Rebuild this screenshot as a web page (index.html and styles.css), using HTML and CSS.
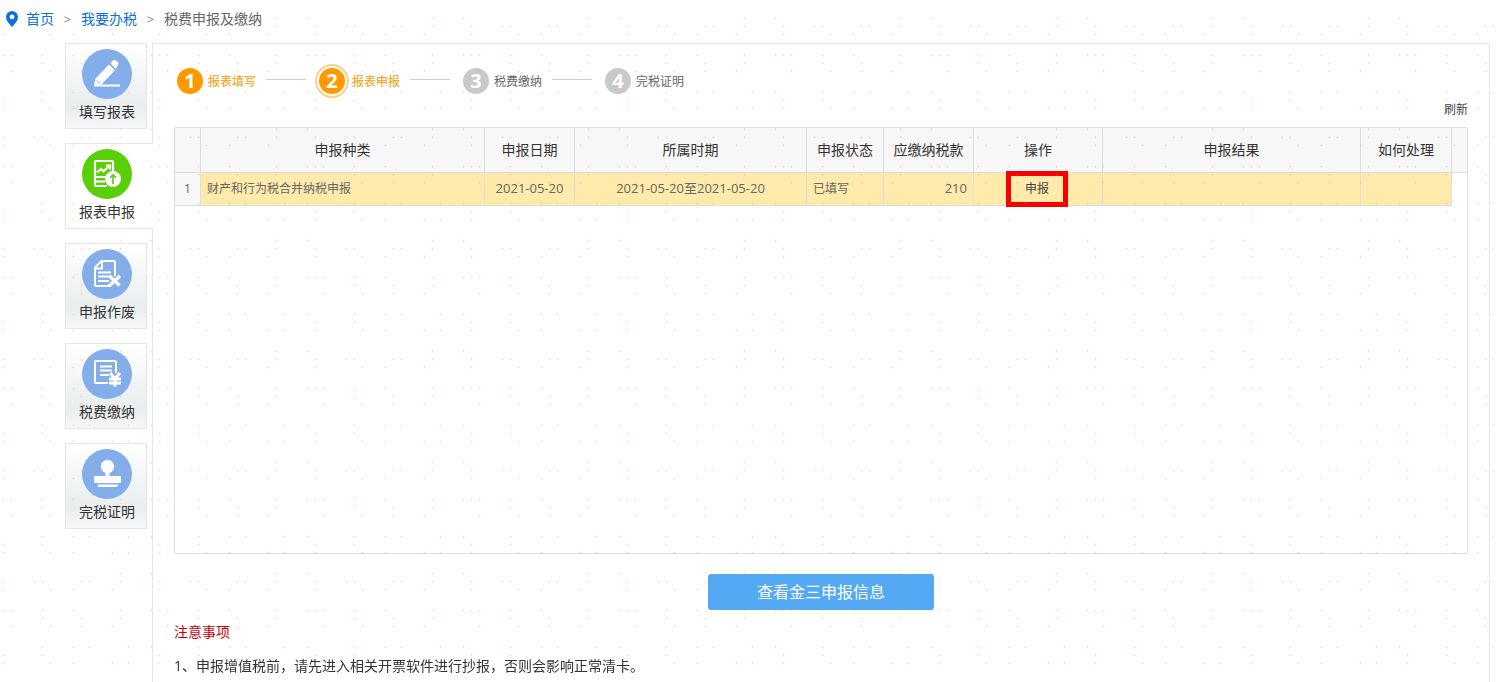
FILE: index.html
```html
<!DOCTYPE html>
<html lang="zh-CN">
<head>
<meta charset="utf-8">
<title>税费申报及缴纳</title>
<link rel="stylesheet" href="styles.css">
</head>
<body>
<header class="top">
<nav class="crumbs" aria-label="breadcrumb">
  <svg class="pin" viewBox="0 0 12 16" aria-hidden="true"><path fill="#0b6fdc" fill-rule="evenodd" d="M6 0a6 6 0 0 1 6 6c0 3-2 5.500-6 10C2 11.500 0 9 0 6a6 6 0 0 1 6-6zm0 3.500a2.400 2.400 0 1 0 0 4.800 2.400 2.400 0 0 0 0-4.800z"/></svg>
  <a href="#">首页</a><span class="sep">&gt;</span><a href="#">我要办税</a><span class="sep">&gt;</span><span>税费申报及缴纳</span>
</nav>
</header>
<div class="layout">
  <nav class="tabs" aria-label="办税步骤">
    <a class="tab" href="#">
      <svg class="tab-icon" viewBox="0 0 50 50" aria-hidden="true"><circle cx="25" cy="25" r="25"/><g fill="#fff"><path d="M12.500 35.500H38v2H12z"/><path d="M12 36.500l1.500-7L27 15.500l6 5.800L19.500 35.500z"/><path d="M28.500 14.200l2.300-2.500c1-1 2.200-1.100 3.300-.1l1.600 1.500c1.100 1.100 1 2.300.1 3.300l-1.900 3.500z"/></g><path d="M14.700 31.400l3.800 3.600" stroke="#83aee9" stroke-width="1"/></svg>
      <span>填写报表</span>
    </a>
    <a class="tab tab-active" href="#" aria-current="page">
      <svg class="tab-icon" viewBox="0 0 50 50" aria-hidden="true"><circle cx="25" cy="25" r="25"/><g fill="none" stroke="#fff" stroke-width="2.200"><path d="M25 37H14a1 1 0 0 1-1-1V13a1 1 0 0 1 1-1h16a1 1 0 0 1 1 1v10"/><path d="M15 23.500l4-3.500 2.500 2.200 6-5.200M24 16.500h4v4M14 28h10M14 32.500h9"/></g><circle cx="31" cy="30" r="8" fill="#fff"/><path d="M31 35v-9M28 28.800l3-3 3 3" fill="none" stroke="#58cf06" stroke-width="1.600"/></svg>
      <span>报表申报</span>
    </a>
    <a class="tab" href="#">
      <svg class="tab-icon" viewBox="0 0 50 50" aria-hidden="true"><circle cx="25" cy="25" r="25"/><g fill="none" stroke="#fff" stroke-width="2"><path d="M29 37H14a1 1 0 0 1-1-1V18.500l6.500-6.500H32a1 1 0 0 1 1 1V27M13 19.500h7V12M16 23.500h13M16 27.500h12M16 32h11"/><path d="M27.500 27l10 9.500M38 27L27 37" stroke-width="3.600"/></g></svg>
      <span>申报作废</span>
    </a>
    <a class="tab" href="#">
      <svg class="tab-icon" viewBox="0 0 50 50" aria-hidden="true"><circle cx="25" cy="25" r="25"/><g fill="none" stroke="#fff" stroke-width="2"><path d="M26 34H14a1 1 0 0 1-1-1V13a1 1 0 0 1 1-1h19a1 1 0 0 1 1 1v11M18 17.500h12M18 21.500h12M18 26h9"/><path d="M28 24l5 5.500 5-5.500M27 30h12M27 34h12M33 29v8.500" stroke-width="3"/></g></svg>
      <span>税费缴纳</span>
    </a>
    <a class="tab" href="#">
      <svg class="tab-icon" viewBox="0 0 50 50" aria-hidden="true"><circle cx="25" cy="25" r="25"/><g fill="#fff"><circle cx="25.500" cy="17.500" r="6.700"/><path d="M23.500 22h4v6h-4z"/><rect x="12" y="27" width="27" height="7" rx="1"/><path d="M15.500 35.500h20.500l-1 2.500H16.500z"/></g></svg>
      <span>完税证明</span>
    </a>
  </nav>
  <main class="panel">
    <ol class="steps">
      <li class="step step-done"><span class="num">1</span><span class="name">报表填写</span></li>
      <li class="step step-done step-now" aria-current="step"><span class="num">2</span><span class="name">报表申报</span></li>
      <li class="step"><span class="num">3</span><span class="name">税费缴纳</span></li>
      <li class="step"><span class="num">4</span><span class="name">完税证明</span></li>
    </ol>
    <div class="tools"><a class="refresh" href="#">刷新</a></div>
    <div class="grid">
      <table>
        <colgroup><col class="c-index"><col class="c-kind"><col class="c-date"><col class="c-period"><col class="c-state"><col class="c-date"><col class="c-action"><col><col class="c-how"><col class="c-end"></colgroup>
        <thead>
          <tr><th></th><th>申报种类</th><th>申报日期</th><th>所属时期</th><th>申报状态</th><th>应缴纳税款</th><th>操作</th><th>申报结果</th><th>如何处理</th><th></th></tr>
        </thead>
        <tbody>
          <tr><td class="index">1</td><td>财产和行为税合并纳税申报</td><td class="mid digits">2021-05-20</td><td class="mid digits">2021-05-20至2021-05-20</td><td>已填写</td><td class="right digits">210</td><td class="action"><button class="declare" type="button">申报</button></td><td></td><td></td><td class="end"></td></tr>
        </tbody>
      </table>
    </div>
    <button class="query" type="button">查看金三申报信息</button>
    <h2 class="notice">注意事项</h2>
    <p class="note">1、申报增值税前，请先进入相关开票软件进行抄报，否则会影响正常清卡。</p>
  </main>
</div>
<svg class="speckle" aria-hidden="true">
  <defs>
    <g id="s"><path fill-opacity=".13" d="M-1 0h3v1h-3zM0-1h1v3h-1z"/><path fill-opacity=".2" d="M0 0h1v1h-1z"/></g>
    <pattern id="speckles" x="108" y="88" width="156" height="111" patternUnits="userSpaceOnUse">
      <g fill="#f98a4e">
        <use href="#s" x="20" y="4"/><use href="#s" x="43" y="4"/><use href="#s" x="90" y="4"/><use href="#s" x="121" y="4"/><use href="#s" x="137" y="4"/>
        <use href="#s" x="51" y="12"/><use href="#s" x="90" y="12"/>
        <use href="#s" x="4" y="20"/><use href="#s" x="20" y="20"/><use href="#s" x="51" y="20"/><use href="#s" x="98" y="20"/><use href="#s" x="121" y="20"/>
        <use href="#s" x="12" y="41"/><use href="#s" x="43" y="41"/>
        <use href="#s" x="12" y="49"/><use href="#s" x="51" y="49"/><use href="#s" x="82" y="49"/><use href="#s" x="90" y="49"/><use href="#s" x="129" y="49"/><use href="#s" x="137" y="49"/>
        <use href="#s" x="4" y="57"/><use href="#s" x="51" y="57"/><use href="#s" x="98" y="57"/><use href="#s" x="121" y="57"/>
        <use href="#s" x="12" y="78"/><use href="#s" x="43" y="78"/><use href="#s" x="51" y="78"/><use href="#s" x="59" y="78"/><use href="#s" x="90" y="78"/><use href="#s" x="121" y="78"/>
        <use href="#s" x="12" y="86"/><use href="#s" x="90" y="86"/><use href="#s" x="129" y="86"/>
        <use href="#s" x="4" y="94"/><use href="#s" x="59" y="94"/><use href="#s" x="98" y="94"/><use href="#s" x="129" y="94"/>
      </g>
    </pattern>
  </defs>
  <rect width="100%" height="100%" fill="url(#speckles)"/>
</svg>
</body>
</html>
```
FILE: styles.css
```css
* { box-sizing: border-box; }
body {
  margin: 0;
  min-height: 100vh;
  display: flex;
  flex-direction: column;
  background: #fff;
  color: #333;
  font: 14px/20px "Open Sans", "Noto Sans CJK SC", sans-serif;
}
a { color: inherit; text-decoration: none; }
button { border: 0; padding: 0; font: inherit; color: inherit; background: none; cursor: pointer; }

.top { display: flex; align-items: flex-start; height: 43px; padding-top: 4px; }
.crumbs {
  position: relative;
  z-index: 2;
  display: flex;
  align-items: center;
  height: 29px;
  padding: 0 6px;
  background: #fff;
  color: #666;
}
.crumbs a { color: #0b6fdc; }
.pin { width: 12px; height: 16px; margin-right: 8px; }
.sep { width: 27px; text-align: center; font-size: 13px; color: #888; }

.layout { flex: 1; display: flex; padding: 0 16px 0 65px; }
.tabs { width: 87px; display: flex; flex-direction: column; gap: 14px; }
.tab {
  width: 82px;
  height: 86px;
  padding: 5px 0 0 2px;
  border: 1px solid #e2e7ee;
  background: linear-gradient(#fff, #e9edee 75%, #f6f7f8);
  display: flex;
  flex-direction: column;
  align-items: center;
  gap: 3px;
}
.tab-active {
  position: relative;
  width: 88px;
  padding-right: 7px;
  border-right: 0;
  background: #fff;
}
.tab-icon { width: 50px; height: 50px; fill: #83aee9; }
.tab-active .tab-icon { fill: #58cf06; }

.panel { flex: 1; min-width: 0; padding: 20px 21px 0; border: 1px solid #e2e7ee; border-bottom: 0; }

.steps { display: flex; margin: 0; padding: 0 0 0 3px; list-style: none; }
.step { display: flex; align-items: center; height: 34px; font-size: 12px; color: #666; gap: 5px; }
.step:not(:last-child)::after { content: ""; flex: none; width: 40px; height: 1px; margin: 0 13px 3px 5px; background: #ccc; }
.num {
  width: 26px;
  height: 26px;
  border-radius: 50%;
  background: #c9c9c9;
  color: #fff;
  font-size: 20px;
  line-height: 26px;
  font-weight: 700;
  text-align: center;
}
.name { padding-top: 2px; }
.step-done { color: #ff9900; }
.step-done .num { background: #ff9900; }
.step-now .num { margin-right: 2px; box-shadow: 0 0 0 2px #fff, 0 0 0 4px #ffcf87; }

.tools { height: 29px; padding-top: 2px; text-align: right; font-size: 12px; }
.refresh { color: #444; }

.grid { height: 427px; border: 1px solid #ddd; border-radius: 2px; overflow: hidden; }
table { width: 100%; table-layout: fixed; border-collapse: separate; border-spacing: 0; }
.c-index { width: 26px; }
.c-kind { width: 284px; }
.c-date { width: 90px; }
.c-period { width: 232px; }
.c-state { width: 77px; }
.c-action { width: 129px; }
.c-how { width: 91px; }
.c-end { width: 15px; }
th, td { padding: 0; border: solid #ddd; border-width: 0 1px 1px 0; white-space: nowrap; }
th { height: 45px; background: #f7f7f7; font-weight: 400; }
td { height: 33px; padding: 0 6px; background: #feebab; font-size: 12px; text-align: left; color: #666; }
th:last-child { border-right: 0; }
.index { background: #f7f7f7; padding: 0; text-align: center; }
.mid { text-align: center; }
.right { text-align: right; }
.digits { padding-bottom: 2px; font-size: 13px; }
.end { padding: 0; background: none; border: 0; }
.action { padding: 0 2px 1px 0; text-align: center; }
.declare { width: 52px; height: 26px; outline: 5px solid #f60000; color: #444; vertical-align: middle; }

.query {
  display: block;
  width: 226px;
  height: 36px;
  margin: 20px auto 12px;
  border-radius: 3px;
  background: #53a9f4;
  color: #fff;
  font-size: 16px;
}
.notice, .note { position: relative; z-index: 2; width: fit-content; background: #fff; }
.notice { margin: 0 0 14px; font-size: 14px; font-weight: 400; color: #c7000b; }
.note { margin: 0; }

.speckle { position: fixed; z-index: 1; inset: 0; width: 100%; height: 100%; pointer-events: none; }
```
